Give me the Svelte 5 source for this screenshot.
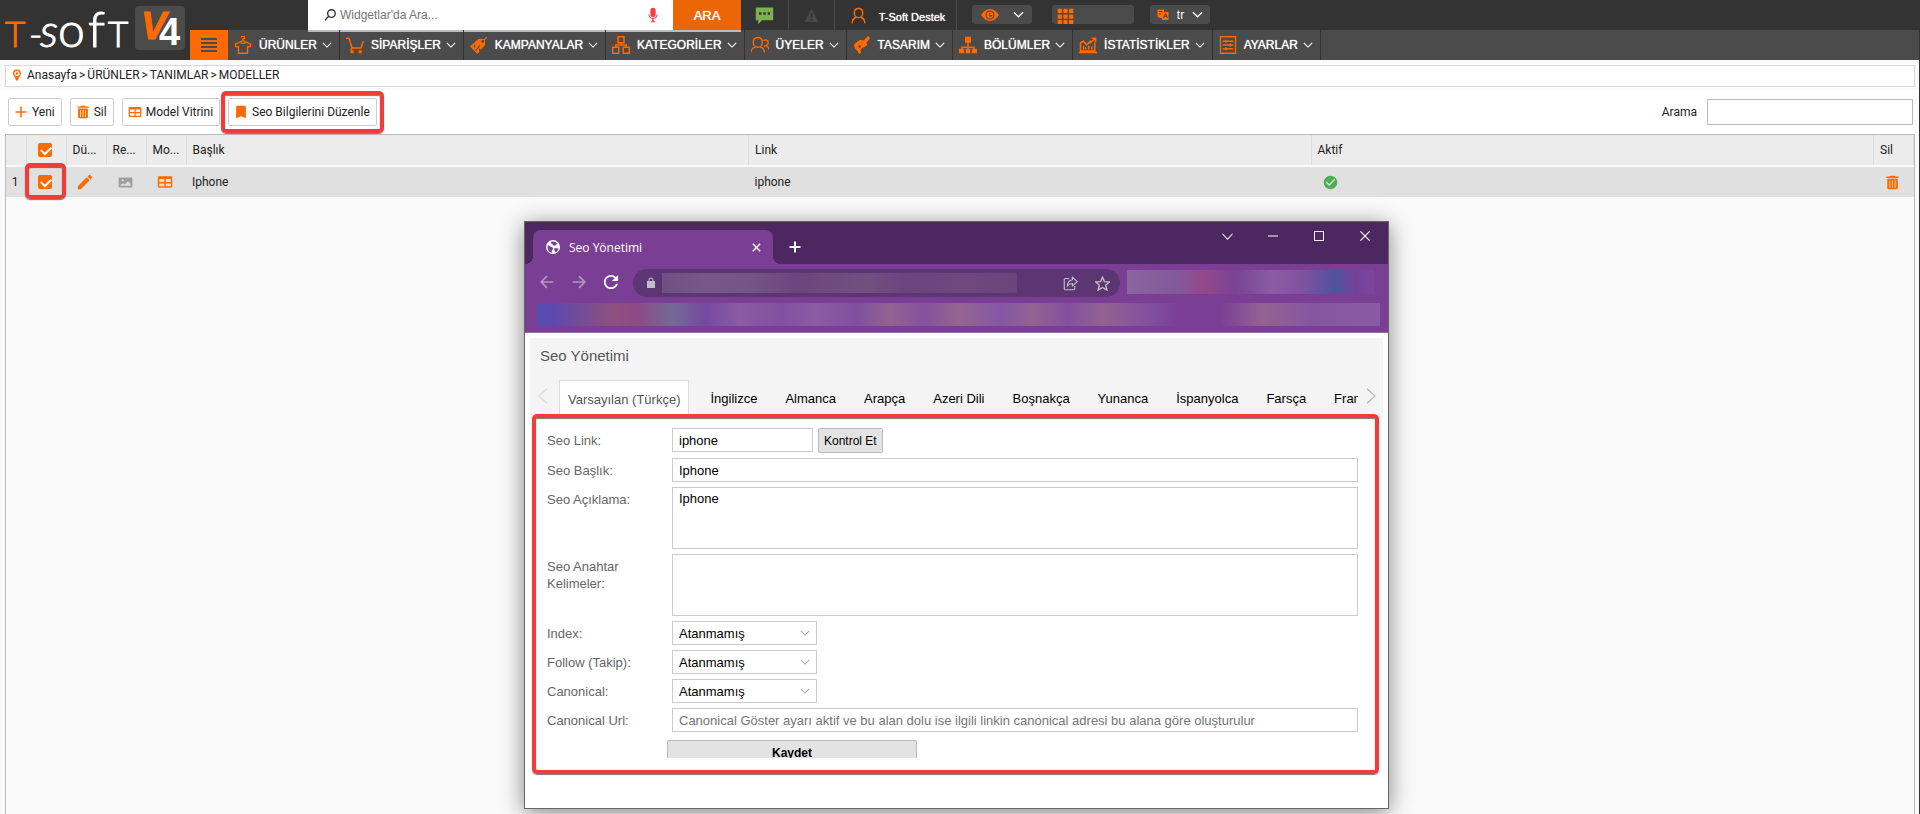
<script lang="ts">
    type Icon = { d: string, line?: number, box?: string };

    const icons: Record<string, Icon> = {
        plus: { d: "M19 13h-6v6h-2v-6H5v-2h6V5h2v6h6v2z", box: "3 3 18 18" },
        trash: { d: "M5 7h14v12a2 2 0 0 1-2 2H7a2 2 0 0 1-2-2zM8 9v10h1V9zM11.5 9v10h1V9zM15 9v10h1V9zM9 3h6l1 1h4v2H4V4h4z", box: "2 2 20 20" },
        table: { d: "M4 4h16a2 2 0 0 1 2 2v12a2 2 0 0 1-2 2H4a2 2 0 0 1-2-2V6a2 2 0 0 1 2-2zM4 8v4h7V8zM13 8v4h7V8zM4 14v4h7v-4zM13 14v4h7v-4z", box: "1 1 22 22" },
        bookmark: { d: "M17 3H7c-1.1 0-2 .9-2 2v16l7-3 7 3V5c0-1.1-.9-2-2-2z", box: "2 2 20 20" },
        pencil: { d: "M3 17.25V21h3.75L17.81 9.94l-3.75-3.75L3 17.25zM20.71 7.04a1 1 0 0 0 0-1.41l-2.34-2.34a1 1 0 0 0-1.41 0l-1.83 1.83 3.75 3.75 1.83-1.83z", box: "2 2 20 20" },
        image: { d: "M3 4h18a2 2 0 0 1 2 2v12a2 2 0 0 1-2 2H3a2 2 0 0 1-2-2V6a2 2 0 0 1 2-2zM4 17h16v-3l-4-4-5 5-3-2-4 3zM6 7v3h3V7z" },
        ok: { d: "M12 2a10 10 0 1 0 0 20 10 10 0 0 0 0-20zM10 17l-5-5 1.4-1.4 3.6 3.6 7.6-7.6L19 8z", box: "1 1 22 22" },
        pin: { d: "M12 1a8 8 0 0 0-8 8c0 4 5 7 6 14h4c1-7 6-10 6-14a8 8 0 0 0-8-8zM12 4a5 5 0 1 1 0 10 5 5 0 0 1 0-10zM12 6.500a2.500 2.500 0 1 0 0 5 2.500 2.500 0 0 0 0-5z" },
        search: { d: "M14.500 3a6.500 6.500 0 1 1 0 13 6.500 6.500 0 0 1 0-13zM9.500 14l-6 7", line: 2.4 },
        mic: { d: "M12 15c2.200 0 4-1.500 4-3.500v-7C16 2.500 14.200 1 12 1S8 2.500 8 4.500v7C8 13.500 9.800 15 12 15zM19 11c0 4-3 6.500-6 7v2l2 2v1H9v-1l2-2v-2c-3-.5-6-3-6-7h1.500c0 3.300 2.500 5.500 5.500 5.500s5.500-2.200 5.500-5.500z" },
        chat: { d: "M1 2h22v16H9l-5 5v-5H1zM5 8v3h3V8zM10.500 8v3h3V8zM16 8v3h3V8z" },
        warn: { d: "M12 2 1 22h22zM10.500 8v8h3V8zM10.500 17.500v2.500h3v-2.500z" },
        user: { d: "M12 2c4 0 6 3 6 6.500S15.500 15 12 15s-6-3-6-6.500S8 2 12 2zM3 23c0-4 2-7 5.500-8.500M21 23c0-4-2-7-5.500-8.500", line: 2 },
        eye: { d: "M12 4C7 4 3 7.500 0 12c3 4.500 7 8 12 8s9-3.500 12-8c-3-4.500-7-8-12-8zM12 6a6 6 0 1 1 0 12 6 6 0 0 1 0-12zM12 7.500a4.500 4.500 0 1 0 0 9 4.500 4.500 0 0 0 0-9zM12 9v3h3v2h-4V9z" },
        grid: { d: "M1 1h6v6H1zM9 1h6v6H9zM17 1h6v6h-6zM1 9h6v6H1zM9 9h6v6H9zM17 9h6v6h-6zM1 17h6v6H1zM9 17h6v6H9zM17 17h6v6h-6z" },
        lang: { d: "M1 1h13v5h9v16H10v-4H5l-2-2H1zM4 4v2h7V4zM4 9v2h4V9zM16 9l-4 9h2l1-2h4l1 2h2l-4-9zM16 14l1-2 1 2z" },
        shirt: { d: "M12 6V4a2 2 0 1 0-2-2M12 6 2 11v3l4 1v-2M12 6l10 5v3l-4 1v-2M6 13v10h12V13M9 8c1 3 5 3 6 0", line: 1.8 },
        cart: { d: "M0 3h4l4 13h12l3-9M8 16l-2 3", line: 2 },
        cartWheels: { d: "M6 19h4v4H6zM17 19h4v4h-4z" },
        tag: { d: "M11 4h8l3-3 1 1-3 3v7L10 24 0 14zM17 5a2 2 0 1 0 .1 0zM5 12v3h2v-3zM13 12l-6 7 1 1 6-7zM12 17v3h2v-3z" },
        boxes: { d: "M8 1h8v8H8zM1 15h8v8H1zM15 15h8v8h-8zM12 9v3M5 15v-3h14v3", line: 2 },
        users: { d: "M9 2c4 0 6 3 6 6.500S12.500 15 9 15s-6-3-6-6.500S5 2 9 2zM0 22c0-4 2-6 5.500-7.500M18 22c0-4-2-6-5.500-7.500M16 6c4-2 7 0 7 3s-4 5-6 4M20 13c2 1 4 2 4 5", line: 1.8 },
        brush: { d: "M20 0l3 3-5 6 1 3-4 3-3 1-2 3 1 3-3 2-2-4-3-3-2-5 3-3 5-4 5 1zM9 12l-2 2 2 2 2-2z" },
        tree: { d: "M8 1h8v8h-3v5h8v3h3v6h-7v-6h2v-1h-6v1h2v6H9v-6h2v-1H5v1h2v6H0v-6h3v-3h8V9H8z" },
        chart: { d: "M2 20V9l4-2 4 5 6-6M2 9v11h19V9M0 22h24M17 3h5v5M6 18v-5M9 18v-3M13 18v-5M17 18v-4M22 3l-8 7", line: 2 },
        sliders: { d: "M2 1h20v22H2zM5 7h14M5 12h14M5 17h14M9 5v4M15 10v4M9 15v4", line: 1.8 },
        chevron: { d: "M2 7l10 10L22 7", line: 2.6 },
        thinChevron: { d: "M1 6l11 12L23 6", line: 2.2 },
        left: { d: "M18 1 6 12l12 11", line: 2 },
        right: { d: "M6 1l12 11L6 23", line: 2 },
        close: { d: "M4 4l16 16M20 4 4 20", line: 3.2 },
        thinClose: { d: "M1 1l22 22M23 1 1 23", line: 2.6 },
        dash: { d: "M0 12h24", line: 2.4 },
        square: { d: "M1 1h22v22H1z", line: 2.4 },
        cross: { d: "M12 1v22M1 12h22", line: 4 },
        back: { d: "M23 12H2M12 2 2 12l10 10", line: 2.8 },
        forward: { d: "M1 12h21M12 2l10 10-10 10", line: 2.8 },
        reload: { d: "M17.650 6.350C16.200 4.900 14.210 4 12 4c-4.420 0-7.990 3.580-7.990 8s3.570 8 7.990 8c3.730 0 6.840-2.550 7.730-6h-2.080c-.82 2.330-3.040 4-5.650 4-3.310 0-6-2.690-6-6s2.690-6 6-6c1.660 0 3.140.69 4.220 1.780L13 11h7V4z", box: "3 3 18 18" },
        lock: { d: "M18 8h-1V6c0-2.760-2.240-5-5-5S7 3.240 7 6v2H4v14h16V8zM15 8H9V6a3 3 0 0 1 6 0z" },
        share: { d: "M10 4H4a2 2 0 0 0-2 2v14a2 2 0 0 0 2 2h13a2 2 0 0 0 2-2v-4M15 2l8 7-8 7v-4c-4 0-6 1-8 4 0-5 3-9 8-10z", line: 1.8 },
        star: { d: "M12 2l3 7 8 .6-6 5.200 2 7.700-7-4.200-7 4.200 2-7.700-6-5.200L9 9z", line: 2.2 },
        globe: { d: "M12 0a12 12 0 1 0 0 24 12 12 0 0 0 0-24zM3 9c3 0 4 3 7 3 2 1 3 3 1 5-1 1-1 3-1 5C5 21 2 16 3 9zM9 3c4-1 8 0 11 4-3 0-3 3-6 3-2 0-2-3-4-3-1-1-2-2-1-4zM14 14h7c0 3-2 6-5 7 0-3-3-4-2-7z" },
    };

    const menu = [
        { icon: "shirt", text: "ÜRÜNLER" },
        { icon: "cart", text: "SİPARİŞLER" },
        { icon: "tag", text: "KAMPANYALAR" },
        { icon: "boxes", text: "KATEGORİLER" },
        { icon: "users", text: "ÜYELER" },
        { icon: "brush", text: "TASARIM" },
        { icon: "tree", text: "BÖLÜMLER" },
        { icon: "chart", text: "İSTATİSTİKLER" },
        { icon: "sliders", text: "AYARLAR" },
    ];

    const languages = ["Varsayılan (Türkçe)", "İngilizce", "Almanca", "Arapça", "Azeri Dili", "Boşnakça", "Yunanca", "İspanyolca", "Farsça", "Fransızca"];

    let language = $state(0);
    let allChecked = $state(true);
    let rowChecked = $state(true);
    let seo = $state({
        link: "iphone",
        title: "Iphone",
        description: "Iphone",
        keywords: "",
        url: "",
    });
    const options = [
        { id: "index", label: "Index:" },
        { id: "follow", label: "Follow (Takip):" },
        { id: "canonical", label: "Canonical:" },
    ];
</script>

{#snippet icon(name: string, size: number)}
    {@const item = icons[name]}
    <svg width={size} height={size} viewBox={item.box ?? "0 0 24 24"} aria-hidden="true">
        {#if item.line}
            <path d={item.d} fill="none" stroke="currentColor" stroke-width={item.line} />
        {:else}
            <path d={item.d} fill="currentColor" fill-rule="evenodd" />
        {/if}
        {#if name == "cart"}
            <path d={icons.cartWheels.d} fill="currentColor" />
        {/if}
    </svg>
{/snippet}

<div class="page">
    <header>
        <a class="logo" href="#home" aria-label="T-Soft V4">
            <svg width="190" height="60" viewBox="0 0 190 60">
                <text class="wordmark" y="47"><tspan x="5" font-size="35" class="orange">T</tspan><tspan x="29" font-size="36">-</tspan><tspan x="40" font-size="46" font-style="italic">s</tspan><tspan x="58" font-size="48">o</tspan><tspan x="88" font-size="50">f</tspan><tspan x="108" font-size="35">T</tspan></text>
                <rect x="135" y="6" width="50" height="44" rx="4" fill="#4b4b4b" />
                <text class="version" y="39"><tspan x="141" class="orange" font-style="italic">V</tspan><tspan x="159" y="45">4</tspan></text>
            </svg>
        </a>
        <div class="bars">
            <div class="top">
                <form class="widget-search">
                    {@render icon("search", 14)}
                    <input type="text" placeholder="Widgetlar'da Ara..." aria-label="Widgetlar'da Ara" />
                    <span class="mic">{@render icon("mic", 16)}</span>
                    <button type="button">ARA</button>
                </form>
                <button class="tool chat" aria-label="Mesajlar">{@render icon("chat", 19)}</button>
                <button class="tool warning" aria-label="Uyarılar">{@render icon("warn", 15)}</button>
                <a class="tool account" href="#hesap">{@render icon("user", 17)}<span>T-Soft Destek</span></a>
                <div class="pills">
                    <button class="pill" aria-label="Görünüm"><span class="orange">{@render icon("eye", 18)}</span>{@render icon("chevron", 11)}</button>
                    <button class="pill wide" aria-label="Uygulamalar"><span class="orange">{@render icon("grid", 17)}</span></button>
                    <button class="pill"><span class="orange">{@render icon("lang", 12)}</span>tr{@render icon("chevron", 11)}</button>
                </div>
            </div>
            <nav>
                <button class="burger" aria-label="Menü"><i></i><i></i><i></i><i></i></button>
                {#each menu as item}
                    <a href="#menu">
                        <span class="orange">{@render icon(item.icon, 18)}</span>
                        {item.text}
                        {@render icon("chevron", 10)}
                    </a>
                {/each}
            </nav>
        </div>
    </header>

    <div class="breadcrumb">
        <span class="orange">{@render icon("pin", 12)}</span>
        <a href="#home">Anasayfa</a><i>&gt;</i><a href="#urunler">ÜRÜNLER</a><i>&gt;</i><a href="#tanimlar">TANIMLAR</a><i>&gt;</i><a href="#modeller">MODELLER</a>
    </div>

    <div class="toolbar">
        <button>{@render icon("plus", 14)}Yeni</button>
        <button>{@render icon("trash", 14)}Sil</button>
        <button>{@render icon("table", 14)}Model Vitrini</button>
        <button class="marked">{@render icon("bookmark", 14)}Seo Bilgilerini Düzenle</button>
        <label for="filter">Arama</label>
        <input id="filter" type="text" />
    </div>

    <main>
        <table>
            <colgroup>
                <col class="number" /><col class="small" /><col class="small" /><col class="small" /><col class="small" />
                <col /><col /><col />
                <col class="small" />
            </colgroup>
            <thead>
                <tr>
                    <th></th>
                    <th class="center"><input type="checkbox" aria-label="Tümünü seç" bind:checked={allChecked} /></th>
                    <th>Dü...</th>
                    <th>Re...</th>
                    <th>Mo...</th>
                    <th>Başlık</th>
                    <th>Link</th>
                    <th>Aktif</th>
                    <th>Sil</th>
                </tr>
            </thead>
            <tbody>
                <tr>
                    <td class="center">1</td>
                    <td class="center marked"><input type="checkbox" aria-label="Iphone seç" bind:checked={rowChecked} /></td>
                    <td class="center orange">{@render icon("pencil", 16)}</td>
                    <td class="center gray">{@render icon("image", 15)}</td>
                    <td class="center orange">{@render icon("table", 16)}</td>
                    <td>Iphone</td>
                    <td>iphone</td>
                    <td class="status">{@render icon("ok", 15)}</td>
                    <td class="center orange">{@render icon("trash", 15)}</td>
                </tr>
            </tbody>
        </table>
    </main>

    <section class="window">
        <div class="titlebar">
            <div class="browser-tab">
                {@render icon("globe", 14)}
                <span>Seo Yönetimi</span>
                <button aria-label="Sekmeyi kapat">{@render icon("close", 11)}</button>
            </div>
            <button class="new-tab" aria-label="Yeni sekme">{@render icon("cross", 12)}</button>
            <div class="controls">
                <button aria-label="Sekme ara">{@render icon("thinChevron", 11)}</button>
                <button aria-label="Küçült">{@render icon("dash", 10)}</button>
                <button aria-label="Büyüt">{@render icon("square", 10)}</button>
                <button aria-label="Kapat">{@render icon("thinClose", 10)}</button>
            </div>
        </div>
        <div class="addressbar">
            <button class="dim" aria-label="Geri">{@render icon("back", 14)}</button>
            <button class="dim" aria-label="İleri">{@render icon("forward", 14)}</button>
            <button aria-label="Yenile">{@render icon("reload", 16)}</button>
            <div class="address">
                {@render icon("lock", 12)}
                <div class="hidden-url"></div>
                {@render icon("share", 15)}
                {@render icon("star", 15)}
            </div>
            <div class="extensions"></div>
        </div>
        <div class="bookmarks"><div></div></div>

        <div class="content">
            <div class="panel">
                <h1>Seo Yönetimi</h1>
                <div class="tabs">
                    <button class="arrow" aria-label="Önceki">{@render icon("left", 16)}</button>
                    <div class="strip" role="tablist">
                        {#each languages as name, index}
                            <button
                                role="tab"
                                aria-selected={index == language}
                                class={{active: index == language}}
                                onclick={() => { language = index; }}
                            >{name}</button>
                        {/each}
                    </div>
                    <button class="arrow next" aria-label="Sonraki">{@render icon("right", 16)}</button>
                </div>
            </div>
            <form class="seo marked">
                <label for="link">Seo Link:</label>
                <div class="inline">
                    <input id="link" type="text" bind:value={seo.link} />
                    <button type="button">Kontrol Et</button>
                </div>
                <label for="title">Seo Başlık:</label>
                <input id="title" type="text" bind:value={seo.title} />
                <label for="description">Seo Açıklama:</label>
                <textarea id="description" bind:value={seo.description}></textarea>
                <label for="keywords">Seo Anahtar Kelimeler:</label>
                <textarea id="keywords" bind:value={seo.keywords}></textarea>
                {#each options as option}
                    <label for={option.id}>{option.label}</label>
                    <div class="select">
                        <select id={option.id}><option>Atanmamış</option></select>
                        {@render icon("chevron", 10)}
                    </div>
                {/each}
                <label for="url">Canonical Url:</label>
                <input id="url" type="text" placeholder="Canonical Göster ayarı aktif ve bu alan dolu ise ilgili linkin canonical adresi bu alana göre oluşturulur" bind:value={seo.url} />
                <div class="save"><button type="button">Kaydet</button></div>
            </form>
        </div>
    </section>
</div>

<style>
    :global(body) {
        background: #fafafa;
    }

    .page, .page * {
        box-sizing: border-box;
    }

    .page {
        --orange: #ff6a00;
        --red: #f43b3b;

        position: relative;
        display: flex;
        flex-direction: column;
        min-height: 100vh;
        overflow: hidden;
        border-right: 1px solid #333;
        font-family: Roboto, sans-serif;
        font-size: 12px;
        color: #222;
    }

    button, input, select, textarea {
        font: inherit;
        color: inherit;
        margin: 0;
        outline: none;
    }

    button {
        display: flex;
        align-items: center;
        justify-content: center;
        padding: 0;
        border: none;
        background: none;
        cursor: pointer;
    }

    a {
        color: inherit;
        text-decoration: none;
    }

    svg {
        display: block;
        flex-shrink: 0;
    }

    .orange {
        color: var(--orange);
    }

    .gray {
        color: #9e9e9e;
    }

    /* red annotation frame */
    .marked {
        position: relative;
    }

    .marked::after {
        content: "";
        position: absolute;
        inset: -8px;
        border: 4px solid var(--red);
        border-radius: 5px;
        box-shadow: 0 1px 1px #0008, inset 0 1px 1px #0008;
        pointer-events: none;
    }

    header {
        display: flex;
        height: 60px;
        background: #333;
        color: #fff;
        font-family: "Liberation Sans", sans-serif;
        font-size: 12px;
    }

    .logo text {
        fill: #fff;
    }

    .logo .wordmark {
        font-family: Lato, sans-serif;
        font-weight: 300;
        stroke: #fff;
        stroke-width: 1px;
    }

    .logo .orange {
        fill: var(--orange);
        stroke: var(--orange);
    }

    .logo .version {
        font-size: 38px;
        font-weight: 700;
    }

    .bars {
        flex: 1;
    }

    .top {
        display: flex;
        height: 30px;
        padding-left: 118px;
    }

    .widget-search {
        display: flex;
        align-items: center;
        width: 433px;
        height: 30px;
        padding-left: 15px;
        background: #fff;
        color: #333;
        box-shadow: 0 2px #bbb;
    }

    .widget-search input {
        flex: 1;
        border: none;
        padding: 0 3px;
    }

    .mic {
        margin-right: 12px;
        color: #f04444;
    }

    .widget-search button {
        width: 68px;
        height: 30px;
        background: #ec6608;
        color: #fff;
        font-size: 13px;
        text-shadow: 0 0 1px #fff;
    }

    .tool {
        display: flex;
        align-items: center;
        justify-content: center;
        width: 48px;
        border-right: 1px solid #4b4b4b;
    }

    .chat {
        color: #7cb050;
    }

    .warning {
        width: 46px;
        color: #4b4b4b;
    }

    .account {
        width: 122px;
        gap: 12px;
        padding-left: 4px;
        font-size: 11px;
        color: var(--orange);
    }

    .account span {
        padding-top: 4px;
        color: #fff;
        text-shadow: 0 0 1px #fff;
    }

    .pills {
        display: flex;
        align-items: center;
        gap: 16px;
        padding-left: 15px;
        padding-bottom: 1px;
        text-shadow: 0 0 1px #fff;
    }

    .pill {
        width: 60px;
        height: 19px;
        gap: 8px;
        border-radius: 3px;
        background: #4b4b4b;
    }

    .pill:first-child {
        gap: 14px;
        margin-right: 4px;
    }

    .wide {
        width: 82px;
        justify-content: flex-start;
        padding: 4px 5px 0;
        overflow: hidden;
    }

    nav {
        display: flex;
        height: 30px;
        background: #4b4b4b;
    }

    .burger {
        width: 38px;
        flex-direction: column;
        gap: 2px;
        background: var(--orange);
    }

    .burger i {
        width: 16px;
        height: 2px;
        background: #4b4b4b;
    }

    nav a {
        display: flex;
        align-items: center;
        padding: 0 7px 1px 6px;
        border-right: 1px solid #333;
        gap: 5px;
        text-shadow: 0 0 1px #fff;
    }

    nav a .orange {
        margin-right: 2px;
    }

    .breadcrumb {
        display: flex;
        align-items: center;
        height: 22px;
        margin: 5px 4px 3px 5px;
        padding: 0 5px 2px;
        border: 1px solid #d9d9d9;
        background: #fff;
    }

    .breadcrumb .orange {
        margin-right: 4px;
    }

    .breadcrumb i {
        padding: 0 2px;
        font-style: normal;
    }

    .toolbar {
        display: flex;
        align-items: center;
        gap: 8px;
        height: 44px;
        padding: 0 6px 0 8px;
        background: #fff;
    }

    .toolbar button {
        height: 28px;
        padding: 0 6px 0 5px;
        border: 1px solid #ccc;
        border-radius: 2px;
        gap: 4px;
    }

    .toolbar svg {
        color: var(--orange);
    }

    .toolbar label {
        margin-left: auto;
        margin-right: 2px;
    }

    .toolbar input {
        width: 206px;
        height: 26px;
        border: 1px solid #bbb;
    }

    main {
        flex: 1;
        margin: 0 4px 0 5px;
        border: 1px solid #bbb;
        border-bottom: none;
    }

    table {
        width: 100%;
        table-layout: fixed;
        border-collapse: collapse;
    }

    .number {
        width: 20px;
    }

    .small {
        width: 40px;
    }

    th, td {
        height: 31px;
        padding: 0 6px;
        text-align: left;
        font-weight: 400;
        white-space: nowrap;
    }

    th {
        background: #ececec;
        border-right: 1px solid #ddd;
        border-bottom: 2px solid #fafafa;
    }

    td {
        background: #e0e0e0;
    }

    .center {
        padding: 0 2px 0 0;
        text-align: center;
    }

    td svg {
        display: inline-block;
        vertical-align: middle;
    }

    td.marked::after {
        inset: -4px 0 -2px -1px;
        z-index: 1;
    }

    .status {
        padding-left: 12px;
        color: #4caf50;
    }

    input[type="checkbox"] {
        appearance: none;
        display: inline-block;
        width: 14px;
        height: 14px;
        border-radius: 2px;
        background: #fff;
        vertical-align: middle;
    }

    input[type="checkbox"]:checked {
        background: var(--orange);
    }

    input[type="checkbox"]:checked::before {
        content: "";
        display: block;
        width: 8px;
        height: 5px;
        margin: 3px;
        border: solid #fff;
        border-width: 0 0 2px 2px;
        transform: rotate(-45deg);
    }

    .window {
        position: absolute;
        left: 524px;
        top: 221px;
        width: 865px;
        height: 588px;
        border: 1px solid #666;
        background: #fff;
        box-shadow: 0 4px 22px #0007;
        font-family: "Liberation Sans", sans-serif;
        font-size: 13px;
    }

    .titlebar {
        display: flex;
        height: 42px;
        padding: 8px 0 0 8px;
        background: #4d2860;
        color: #fff;
    }

    .browser-tab {
        position: relative;
        display: flex;
        align-items: center;
        width: 240px;
        gap: 9px;
        padding: 0 11px 0 13px;
        border-radius: 8px 8px 0 0;
        background: #7a3f95;
        font-family: "Open Sans", sans-serif;
        font-size: 12px;
    }

    .browser-tab::before, .browser-tab::after {
        content: "";
        position: absolute;
        bottom: 0;
        width: 8px;
        height: 8px;
    }

    .browser-tab::before {
        left: -8px;
        background: radial-gradient(circle at 0 0, transparent 8px, #7a3f95 8px);
    }

    .browser-tab::after {
        right: -8px;
        background: radial-gradient(circle at 100% 0, transparent 8px, #7a3f95 8px);
    }

    .browser-tab span {
        flex: 1;
    }

    .new-tab {
        width: 44px;
    }

    .controls {
        display: flex;
        height: 12px;
        margin-left: auto;
    }

    .controls button {
        width: 46px;
    }

    .addressbar {
        display: flex;
        align-items: center;
        height: 38px;
        padding: 0 14px 2px 6px;
        background: #7a3f95;
        color: #fff;
    }

    .addressbar button {
        width: 32px;
    }

    .dim {
        opacity: 0.45;
    }

    .address {
        display: flex;
        align-items: center;
        width: 487px;
        height: 28px;
        margin: 2px 7px 0 6px;
        padding: 0 10px 0 12px;
        border-radius: 14px;
        background: #5c3672;
        color: #c4bcc8;
        gap: 17px;
    }

    .hidden-url {
        width: 355px;
        height: 20px;
        margin: 0 auto 0 -12px;
        background: linear-gradient(90deg, #705082, #775789 12%, #755587 24%, #6c467e 38%, #71507f 58%, #6c457f 68%, #70487f 85%, #6a447c);
    }

    .extensions {
        flex: 1;
        height: 24px;
        background: linear-gradient(90deg, #8a659e, #82599b 20%, #94488a 31%, #7a4394 44%, #8b5ca4 59%, #8252a0 70%, #4f539d 84%, #74419a 93%, #7d459b);
    }

    .bookmarks {
        height: 31px;
        padding: 1px 8px 0 12px;
        border-bottom: 1px solid #9a6bb0;
        background: #7a3f95;
    }

    .bookmarks div {
        height: 23px;
        background: linear-gradient(90deg, #544fb2, #5d49ab 2%, #8f5080 9%, #8d4a86 12%, #746a97 16%, #7549a0 20%, #8b5ba5 24%, #8150a0 29%, #8b5ba5 33%, #80509f 38%, #936291 42%, #84529f 46%, #95658f 50%, #8557a4 55%, #936291 59%, #8250a0 63%, #936291 67%, #814f9f 73%, #793f96 76%, #793f96 81%, #936291 86%, #8557a1 92%, #8a5ba4);
    }

    .content {
        padding: 5px 5px 0;
    }

    .panel {
        height: 80px;
        padding: 0 4px 0 5px;
        background: #f4f4f4;
        color: #000;
    }

    h1 {
        margin: 0;
        padding: 9px 5px 0;
        height: 42px;
        font-size: 15px;
        font-weight: 400;
        line-height: 18px;
        color: #555;
    }

    .tabs {
        display: flex;
        height: 38px;
    }

    .arrow {
        width: 16px;
        height: 32px;
        flex-shrink: 0;
        color: #ddd;
    }

    .next {
        color: #bbb;
        margin-left: auto;
    }

    .strip {
        display: flex;
        flex: 1;
        padding-left: 8px;
        overflow: hidden;
        margin-right: 5px;
    }

    .strip button {
        padding: 0 14px;
        height: 37px;
        flex-shrink: 0;
    }

    .strip .active {
        height: 38px;
        padding: 0 8px;
        margin-right: 7px;
        border: 1px solid #ddd;
        border-bottom: none;
        background: #fff;
        color: #555;
    }

    .seo {
        display: grid;
        grid-template-columns: 125px 1fr;
        row-gap: 5px;
        margin: 0 8px 0 6px;
        padding: 10px 17px 12px 11px;
        color: #000;
    }

    .seo::after {
        inset: -4px;
    }

    .seo label {
        width: 100px;
        padding-top: 4px;
        line-height: 17px;
        color: #666;
    }

    .seo input, .seo select, .seo textarea {
        display: block;
        width: 100%;
        height: 24px;
        padding: 0 6px;
        border: 1px solid #ccc;
        border-radius: 0;
        background: #fff;
    }

    .seo textarea {
        height: 62px;
        padding: 3px 6px;
        resize: none;
    }

    .seo input::placeholder {
        color: #757575;
    }

    .inline {
        display: flex;
        gap: 5px;
    }

    .seo .inline input {
        width: 141px;
    }

    .seo button {
        height: 25px;
        padding: 0 5px;
        border: 1px solid #bbb;
        border-radius: 2px;
        background: #e3e3e3;
        font-size: 12px;
    }

    .select {
        position: relative;
        width: 145px;
    }

    .seo select {
        appearance: none;
    }

    .select svg {
        position: absolute;
        right: 7px;
        top: 7px;
        color: #aaa;
        pointer-events: none;
    }

    /* the popup cuts the button off below its text */
    .save {
        grid-column: 1 / 3;
        height: 18px;
        margin: 3px 0 0 120px;
        overflow: hidden;
    }

    .seo .save button {
        width: 250px;
        font-weight: 700;
    }
</style>
